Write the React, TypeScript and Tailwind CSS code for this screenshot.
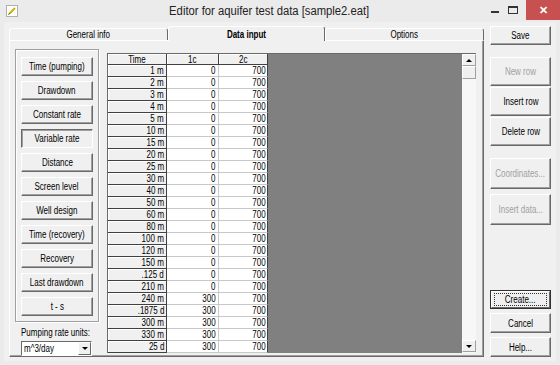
import React from "react";

const rows: [string, number][] = [
  ["1 m", 0],
  ["2 m", 0],
  ["3 m", 0],
  ["4 m", 0],
  ["5 m", 0],
  ["10 m", 0],
  ["15 m", 0],
  ["20 m", 0],
  ["25 m", 0],
  ["30 m", 0],
  ["40 m", 0],
  ["50 m", 0],
  ["60 m", 0],
  ["80 m", 0],
  ["100 m", 0],
  ["120 m", 0],
  ["150 m", 0],
  [".125 d", 0],
  ["210 m", 0],
  ["240 m", 300],
  [".1875 d", 300],
  ["300 m", 300],
  ["330 m", 300],
  ["25 d", 300],
];

const quantityButtons = [
  "Time (pumping)",
  "Drawdown",
  "Constant rate",
  "Variable rate",
  "Distance",
  "Screen level",
  "Well design",
  "Time (recovery)",
  "Recovery",
  "Last drawdown",
  "t - s",
];

// the old dialog font is narrow, so squeeze the glyphs a little
function Txt({ children, className = "" }: { children: React.ReactNode; className?: string }) {
  return <span className={`inline-block whitespace-nowrap scale-x-[0.8] ${className}`}>{children}</span>;
}

function WinButton({
  label,
  disabled = false,
  pressed = false,
  className = "",
}: {
  label: string;
  disabled?: boolean;
  pressed?: boolean;
  className?: string;
}) {
  const bevel = pressed
    ? "border-t-[#696969] border-l-[#696969] border-r-white border-b-white shadow-[inset_1px_1px_0_#a0a0a0]"
    : "border-t-white border-l-white border-r-[#696969] border-b-[#696969] shadow-[inset_-1px_-1px_0_#a0a0a0]";

  return (
    <div
      className={`flex items-center justify-center border bg-[#f0f0f0] text-[10px] ${bevel} ${
        disabled ? "text-[#a0a0a0]" : "text-black"
      } ${className}`}
    >
      <Txt>{label}</Txt>
    </div>
  );
}

function UpArrow() {
  return <span className="block h-0 w-0 border-x-[3px] border-b-[3px] border-x-transparent border-b-black" />;
}

function DownArrow() {
  return <span className="block h-0 w-0 border-x-[3px] border-t-[3px] border-x-transparent border-t-black" />;
}

function DataGrid() {
  return (
    <div className="mt-[4px] flex h-[300px] w-[369px] overflow-hidden border-l border-t border-[#696969] bg-[#808080] leading-[11px]">
      <div className="flex flex-col">
        <div className="flex h-[11px] shrink-0">
          <div className="w-[59px] border-b border-r border-[#404040] bg-[#f0f0f0] text-center shadow-[inset_1px_1px_0_white]">
            <Txt>Time</Txt>
          </div>
          <div className="w-[52px] border-b border-r border-[#404040] bg-[#f0f0f0] text-center shadow-[inset_1px_1px_0_white]">
            <Txt>1c</Txt>
          </div>
          <div className="w-[49px] border-b border-r border-[#404040] bg-[#f0f0f0] text-center shadow-[inset_1px_1px_0_white]">
            <Txt>2c</Txt>
          </div>
        </div>
        {rows.map(([time, rate]) => (
          <div key={time} className="flex h-[12px] shrink-0">
            <div className="w-[59px] border-b border-r border-[#404040] bg-[#f0f0f0] pr-[2px] text-right shadow-[inset_1px_1px_0_white]">
              <Txt className="origin-right">{time}</Txt>
            </div>
            <div className="w-[52px] border-b border-r border-[#c8c8c8] bg-white pr-[2px] text-right">
              <Txt className="origin-right">{rate}</Txt>
            </div>
            <div className="w-[49px] border-b border-r border-b-[#c8c8c8] border-r-[#404040] bg-white pr-[1px] text-right">
              <Txt className="origin-right">700</Txt>
            </div>
          </div>
        ))}
      </div>
      <div className="flex-1" />
      <div className="flex w-[14px] flex-col bg-[#f7f7f7]">
        <div className="flex h-[12px] items-center justify-center border border-t-white border-l-white border-r-[#a0a0a0] border-b-[#a0a0a0] bg-[#f0f0f0]">
          <UpArrow />
        </div>
        <div className="h-[13px] border border-t-white border-l-white border-r-[#a0a0a0] border-b-[#a0a0a0] bg-[#f0f0f0]" />
        <div className="flex-1" />
        <div className="mb-[1px] flex h-[12px] items-center justify-center border border-t-white border-l-white border-r-[#a0a0a0] border-b-[#a0a0a0] bg-[#f0f0f0]">
          <DownArrow />
        </div>
      </div>
    </div>
  );
}

function TitleBar() {
  return (
    <div className="flex h-[22px] items-center">
      <svg viewBox="0 0 12 12" className="ml-[6px] h-[12px] w-[12px]" aria-hidden="true">
        <rect x="0.5" y="0.5" width="11" height="11" fill="#fff" stroke="#b0b0b0" />
        <path d="M3 9 L9 3" stroke="#c9b400" strokeWidth="2" />
        <path d="M2.5 9.5 L3.5 8.5" stroke="#333" strokeWidth="1" />
      </svg>
      <div className="flex flex-1 justify-center pl-[30px] text-[12.5px] text-[#222]">
        <span className="inline-block whitespace-nowrap scale-x-[0.9]">Editor for aquifer test data [sample2.eat]</span>
      </div>
      <div className="flex h-full items-start">
        <div className="mr-[9px] mt-[11px] h-[2px] w-[8px] bg-[#333]" />
        <div className="mr-[8px] mt-[6px] h-[8px] w-[10px] border border-t-[2px] border-[#333]" />
        <div className="flex h-[20px] w-[34px] items-center justify-center bg-[#c75050] text-[11px] font-bold text-white">
          ✕
        </div>
      </div>
    </div>
  );
}

export default function App() {
  return (
    <div className="h-[365px] w-[560px] overflow-hidden bg-[#ebebeb] font-['Liberation_Sans',Arial,sans-serif] text-[10px] text-black">
      <TitleBar />
      <div className="mx-[4px] flex h-[339px] bg-[#f0f0f0] pl-[5px] pt-[4px]">
        <div className="flex w-[475px] flex-col">
          <div className="flex h-[14px] items-end">
            <div className="flex h-[12px] w-[159px] items-center justify-center rounded-t-[3px] border-l border-r border-t border-l-white border-r-[#696969] border-t-white">
              <Txt>General info</Txt>
            </div>
            <div className="relative z-10 -mb-px flex h-[15px] w-[157px] items-center justify-center rounded-t-[3px] border-l border-r border-t border-l-white border-r-[#696969] border-t-white bg-[#f0f0f0] font-bold">
              <Txt>Data input</Txt>
            </div>
            <div className="flex h-[12px] w-[159px] items-center justify-center rounded-t-[3px] border-l border-r border-t border-l-white border-r-[#696969] border-t-white">
              <Txt>Options</Txt>
            </div>
          </div>
          <div className="flex h-[317px] items-start border border-b-[#696969] border-l-white border-r-[#696969] border-t-white pl-[5px] pt-[8px] shadow-[inset_-1px_-1px_0_#a0a0a0]">
            <div className="flex w-[84px] flex-col">
              <div className="flex h-[273px] flex-col gap-[5px] border border-[#a0a0a0] px-[5px] pt-[7px] shadow-[inset_1px_1px_0_white,1px_1px_0_white]">
                {quantityButtons.map((label) => (
                  <WinButton key={label} label={label} pressed={label === "Variable rate"} className="h-[19px]" />
                ))}
              </div>
              <div className="mt-[5px] pl-[6px] leading-[12px]">
                <Txt className="origin-left">Pumping rate units:</Txt>
              </div>
              <div className="ml-[6px] mt-[2px] flex h-[15px] w-[71px] border border-b-white border-l-[#696969] border-r-white border-t-[#696969] bg-white">
                <span className="flex-1 pl-[2px] leading-[13px]">
                  <Txt className="origin-left">m^3/day</Txt>
                </span>
                <div className="flex w-[13px] items-center justify-center border border-t-white border-l-white border-r-[#696969] border-b-[#696969] bg-[#f0f0f0]">
                  <DownArrow />
                </div>
              </div>
            </div>
            <div className="ml-[8px]">
              <DataGrid />
            </div>
          </div>
        </div>
        <div className="ml-[6px] flex w-[61px] flex-col">
          <WinButton label="Save" className="h-[19px]" />
          <WinButton label="New row" disabled className="mt-[12px] h-[29px]" />
          <WinButton label="Insert row" className="mt-[1px] h-[29px]" />
          <WinButton label="Delete row" className="mt-[1px] h-[29px]" />
          <WinButton label="Coordinates..." disabled className="mt-[12px] h-[31px]" />
          <WinButton label="Insert data..." disabled className="mt-[5px] h-[31px]" />
          <div className="mt-[65px] flex h-[19px] border border-[#303030]">
            <div className="flex flex-1 items-center justify-center border border-t-white border-l-white border-r-[#696969] border-b-[#696969]">
              <span className="border border-dotted border-[#333] px-[6px] leading-[11px]">
                <Txt>Create...</Txt>
              </span>
            </div>
          </div>
          <WinButton label="Cancel" className="mt-[4px] h-[20px]" />
          <WinButton label="Help..." className="mt-[4px] h-[20px]" />
        </div>
      </div>
    </div>
  );
}
